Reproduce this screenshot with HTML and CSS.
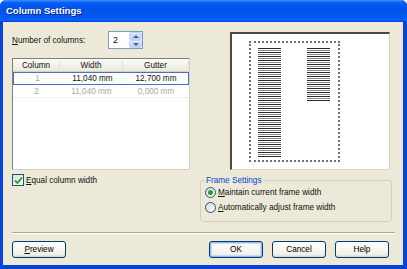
FILE: index.html
```html
<!DOCTYPE html>
<html lang="en">
<head>
    <meta charset="UTF-8">
    <title>Column Settings</title>
    <link rel="stylesheet" href="styles.css">
</head>
<body>
    <div class="window">
        <div class="titlebar">Column Settings</div>

        <div class="content">
            <div class="main">
                <div class="left-col">
                    <div class="count-row">
                        <label class="count-label"><u>N</u>umber of columns:</label>
                        <div class="spin">
                            <span class="spin-value">2</span>
                            <span class="spin-buttons">
                                <span class="spin-btn up"></span>
                                <span class="spin-btn down"></span>
                            </span>
                        </div>
                    </div>

                    <div class="list">
                        <div class="list-row list-header">
                            <span>Column</span>
                            <span>Width</span>
                            <span>Gutter</span>
                        </div>
                        <div class="list-row selected">
                            <span class="muted">1</span>
                            <span>11,040 mm</span>
                            <span>12,700 mm</span>
                        </div>
                        <div class="list-row disabled">
                            <span>2</span>
                            <span>11,040 mm</span>
                            <span>0,000 mm</span>
                        </div>
                    </div>

                    <label class="check-row">
                        <span class="checkbox">
                            <svg width="9" height="9" viewBox="0 0 9 9"><path d="M1 4.5 L3.5 7 L8 1.5" fill="none" stroke="#21a121" stroke-width="1.8"/></svg>
                        </span>
                        <span><u>E</u>qual column width</span>
                    </label>
                </div>

                <div class="right-col">
                    <div class="preview">
                        <div class="frame">
                            <div class="stripes tall"></div>
                            <div class="stripes short"></div>
                        </div>
                    </div>

                    <fieldset class="group">
                        <legend>Frame Settings</legend>
                        <label class="radio-row">
                            <span class="radio checked"></span>
                            <span><u>M</u>aintain current frame width</span>
                        </label>
                        <label class="radio-row">
                            <span class="radio"></span>
                            <span><u>A</u>utomatically adjust frame width</span>
                        </label>
                    </fieldset>
                </div>
            </div>

            <div class="separator"></div>

            <div class="button-row">
                <button class="btn"><u>P</u>review</button>
                <div class="spacer"></div>
                <button class="btn default">OK</button>
                <button class="btn">Cancel</button>
                <button class="btn">Help</button>
            </div>
        </div>
    </div>
</body>
</html>
```

FILE: styles.css
```css
* {
    margin: 0;
    padding: 0;
    box-sizing: border-box;
    font-family: "Liberation Sans", Arial, sans-serif;
}

body {
    background: #ffffff;
}

.window {
    width: 407px;
    height: 269px;
    display: flex;
    flex-direction: column;
    background: #0842d9;
    border-radius: 6px 6px 0 0;
    overflow: hidden;
}

.titlebar {
    height: 22px;
    flex-shrink: 0;
    padding: 5px 0 0 6px;
    color: white;
    font-size: 9.5px;
    font-weight: bold;
    text-shadow: 1px 1px 0 #0a1e8c;
    background: linear-gradient(#3d95ff 0%, #0a5ef4 12%, #0052e8 45%, #0459f2 80%, #0a60fa 92%, #003fd6 100%);
}

.content {
    flex: 1;
    margin: 0 4px 4px 3px;
    background: #ece9d8;
    padding: 9px 11px 0 9px;
    display: flex;
    flex-direction: column;
    font-size: 8.2px;
    color: #111;
}

.main {
    display: flex;
    gap: 10px;
}

.left-col {
    width: 178px;
    display: flex;
    flex-direction: column;
}

.count-row {
    height: 18px;
    display: flex;
    align-items: center;
}

.count-label {
    width: 96px;
}

.spin {
    width: 35px;
    height: 18px;
    background: white;
    border: 1px solid #7f9db9;
    display: flex;
    align-items: center;
    padding-left: 4px;
}

.spin-value {
    flex: 1;
    font-size: 9px;
}

.spin-buttons {
    display: flex;
    flex-direction: column;
    width: 13px;
    height: 16px;
}

.spin-btn {
    flex: 1;
    background: linear-gradient(#dbe6fd, #b7cdfa);
    border: 1px solid #c3d3fd;
    border-radius: 2px;
    position: relative;
}

.spin-btn::after {
    content: "";
    position: absolute;
    left: 3px;
    border-left: 3px solid transparent;
    border-right: 3px solid transparent;
}

.spin-btn.up::after {
    top: 2px;
    border-bottom: 3px solid #4d6185;
}

.spin-btn.down::after {
    top: 2px;
    border-top: 3px solid #4d6185;
}

.list {
    margin-top: 9px;
    height: 112px;
    background: white;
    border: 1px solid #7f7f7f;
    border-right-color: #d4d0c8;
    border-bottom-color: #d4d0c8;
}

.list-row {
    display: grid;
    grid-template-columns: 47px 63px 1fr;
    height: 13px;
    align-items: center;
    border-bottom: 1px solid #f0efe8;
}

.list-row span {
    text-align: center;
}

.list-header {
    height: 13px;
    background: linear-gradient(#fbfbf9, #ebeadb);
    border-bottom: 1px solid #d6d2c2;
}

.list-header span {
    border-right: 1px solid #e2e0d2;
}

.selected {
    border: 1px solid #4b6ec8;
    height: 13px;
}

.muted,
.disabled span {
    color: #a8a8a8;
}

.check-row {
    margin-top: 3px;
    height: 14px;
    display: flex;
    align-items: center;
    gap: 2px;
}

.checkbox {
    width: 12px;
    height: 12px;
    border: 1px solid #1c5180;
    background: linear-gradient(135deg, #dcdcd7, #fbfbf9);
    display: flex;
    align-items: center;
    justify-content: center;
}

.right-col {
    width: 192px;
    display: flex;
    flex-direction: column;
}

.preview {
    margin: 1px 0 0 30px;
    width: 160px;
    height: 138px;
    background: white;
    border-top: 2px solid #4a4a4a;
    border-left: 2px solid #4a4a4a;
    border-right: 1px solid #d8d5c8;
    border-bottom: 1px solid #d8d5c8;
    padding: 7px 0 0 17px;
}

.frame {
    width: 91px;
    height: 121px;
    border: 2px dotted #707070;
    padding: 5px 0 0 7px;
    display: flex;
    gap: 26px;
    align-items: flex-start;
}

.stripes {
    width: 23px;
    background: repeating-linear-gradient(#2a2a2a 0 1px, #ffffff 1px 2px, #8a8a8a 2px 3px, #ffffff 3px 4px);
}

.tall {
    height: 109px;
}

.short {
    height: 54px;
}

.group {
    margin-top: 6px;
    height: 46px;
    border: 1px solid #d0d0bf;
    border-radius: 3px;
    padding: 0 4px;
}

.group legend {
    color: #0046d5;
    padding: 0 1px;
    font-size: 8.2px;
}

.radio-row {
    display: flex;
    align-items: center;
    gap: 2px;
    height: 15px;
}

.radio {
    width: 11px;
    height: 11px;
    border-radius: 50%;
    border: 1px solid #1c5180;
    background: linear-gradient(135deg, #dcdcd7, #fbfbf9);
    position: relative;
}

.radio.checked::after {
    content: "";
    position: absolute;
    left: 2px;
    top: 2px;
    width: 5px;
    height: 5px;
    border-radius: 50%;
    background: #21a121;
}

.separator {
    margin-top: 10px;
    margin-right: -3px;
    border-top: 1px solid #aca899;
    border-bottom: 1px solid #ffffff;
}

.button-row {
    margin-top: 7px;
    display: flex;
    gap: 9px;
    padding-right: 3px;
}

.spacer {
    flex: 1;
}

.btn {
    width: 54px;
    height: 17px;
    font-size: 8.2px;
    border: 1px solid #003c74;
    border-radius: 3px;
    background: linear-gradient(#ffffff, #f0f0ea 85%, #d6d0c5);
    color: #000;
}

.btn.default {
    box-shadow: inset 0 0 0 1px #9db8f0, inset 0 0 0 2px #cedcf7;
}
```
